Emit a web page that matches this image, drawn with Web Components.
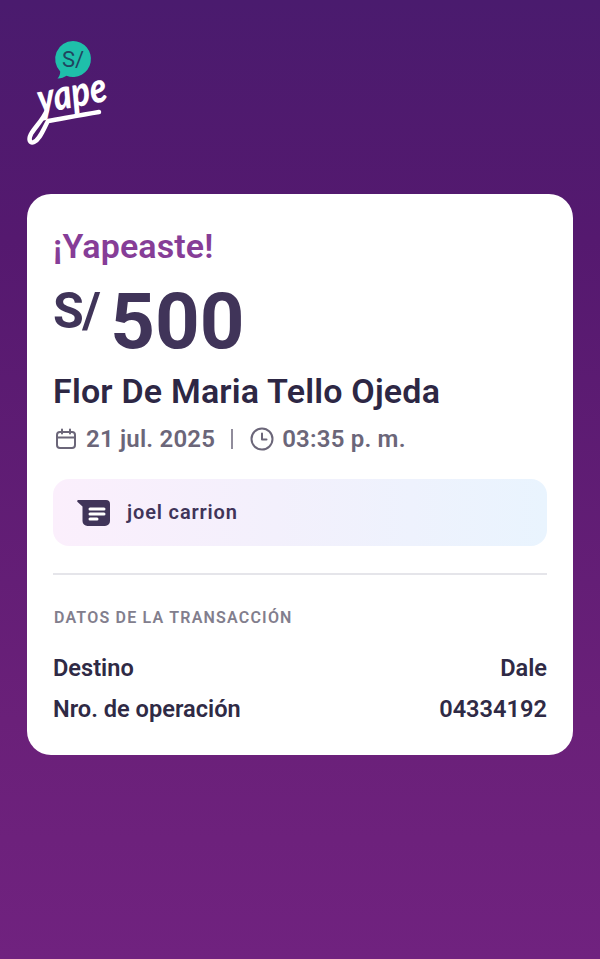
<!DOCTYPE html>
<html lang="es">
<head>
<meta charset="utf-8">
<title>Yape</title>
<style>
  html, body { margin: 0; height: 100%; }
  body { font-family: Roboto, "Liberation Sans", sans-serif; }
</style>
</head>
<body>
<yape-screen>
  <yape-logo></yape-logo>
  <yape-card>
    <yape-amount title-text="¡Yapeaste!" value="500" name="Flor De Maria Tello Ojeda"></yape-amount>
    <yape-date date="21 jul. 2025" time="03:35 p. m."></yape-date>
    <yape-note>joel carrion</yape-note>
    <yape-details heading="DATOS DE LA TRANSACCIÓN">
      <yape-row label="Destino" value="Dale"></yape-row>
      <yape-row label="Nro. de operación" value="04334192"></yape-row>
    </yape-details>
  </yape-card>
</yape-screen>
<script>
class YapeScreen extends HTMLElement {
  constructor() {
    super();
    this.attachShadow({ mode: 'open' });
    this.shadowRoot.innerHTML = `
      <style>
        :host {
          display: flex;
          flex-direction: column;
          box-sizing: border-box;
          height: 959px;
          padding: 40px 27px 0;
          background: linear-gradient(180deg, #4a1b6e 0%, #55196f 25%, #6a2079 75%, #70227f 100%);
          overflow: hidden;
        }
      </style>
      <slot></slot>`;
  }
}

class YapeLogo extends HTMLElement {
  constructor() {
    super();
    this.attachShadow({ mode: 'open' });
    this.shadowRoot.innerHTML = `
      <style>
        :host { display: block; height: 154px; }
        svg { display: block; overflow: visible; }
        text { font-family: Lato, Roboto, sans-serif; }
      </style>
      <svg width="90" height="106" viewBox="0 0 90 106">
        <path d="M46 1a18 18 0 1 1-6.500 34.800c-2.500 1.500-5.500 2.800-9 2.700 1.800-2 2.800-4.300 2.700-7A18 18 0 0 1 46 1z" fill="#1fbfaa"/>
        <text x="46" y="26.500" text-anchor="middle" font-size="22" fill="#1f4560" style="font-family:Roboto,sans-serif">S/</text>
        <text x="13" y="74" font-size="42" font-weight="900" font-style="italic" fill="#fff" textLength="70" lengthAdjust="spacingAndGlyphs" transform="rotate(-11 13 74)">yape</text>
        <path d="M20 70C16 80 8 87 4 94c-3 6-1 10 3 8 6-3 9-12 14-21 17-3 33-6 51-9" fill="none" stroke="#fff" stroke-width="4.500" stroke-linecap="round" stroke-linejoin="round"/>
      </svg>`;
  }
}

class YapeCard extends HTMLElement {
  constructor() {
    super();
    this.attachShadow({ mode: 'open' });
    this.shadowRoot.innerHTML = `
      <style>
        :host {
          display: block;
          box-sizing: border-box;
          height: 561px;
          padding: 30px 26px 0 26px;
          background: #fff;
          border-radius: 24px;
        }
      </style>
      <slot></slot>`;
  }
}

class YapeAmount extends HTMLElement {
  constructor() {
    super();
    this.attachShadow({ mode: 'open' });
    this.shadowRoot.innerHTML = `
      <style>
        :host { display: block; }
        .title { font-size: 34px; line-height: 44px; font-weight: 600; letter-spacing: .1px; color: #863d97; }
        .amount { display: flex; align-items: flex-start; gap: 11px; height: 92px; margin-top: 3px; color: #403459; font-weight: 700; }
        .cur { font-size: 50px; line-height: 56px; margin-top: 12px; font-weight: 700; letter-spacing: -1.500px; }
        .val { font-size: 78px; line-height: 92px; margin-top: 5px; }
        .name { margin-top: 8px; font-size: 34px; line-height: 40px; font-weight: 600; color: #2d2744; letter-spacing: .2px; }
      </style>
      <div class="title">${this.getAttribute('title-text')}</div>
      <div class="amount"><span class="cur">S/</span><span class="val">${this.getAttribute('value')}</span></div>
      <div class="name">${this.getAttribute('name')}</div>`;
  }
}

class YapeDate extends HTMLElement {
  constructor() {
    super();
    this.attachShadow({ mode: 'open' });
    this.shadowRoot.innerHTML = `
      <style>
        :host {
          display: flex;
          align-items: center;
          height: 32px;
          margin-top: 12px;
          font-size: 24px;
          font-weight: 600;
          letter-spacing: .2px;
          color: #6b6679;
        }
        svg { flex: none; display: block; fill: none; stroke: #6b6679; stroke-width: 2; stroke-linecap: round; stroke-linejoin: round; }
        .cal { margin: 0 9px 0 2px; }
        .sep { width: 2px; height: 20px; margin: 0 17px 0 16px; background: #908c9b; }
        .clock { margin-right: 8px; }
      </style>
      <svg class="cal" width="22" height="22" viewBox="0 0 22 22">
        <rect x="2" y="4" width="18" height="16" rx="3"/><path d="M2 9.500h18M7 1.500v4M15 1.500v4"/>
      </svg>
      <span>${this.getAttribute('date')}</span>
      <span class="sep"></span>
      <svg class="clock" width="24" height="24" viewBox="0 0 24 24">
        <circle cx="12" cy="12" r="10.500"/><path d="M12 6.500V12.500H16.500"/>
      </svg>
      <span>${this.getAttribute('time')}</span>`;
  }
}

class YapeNote extends HTMLElement {
  constructor() {
    super();
    this.attachShadow({ mode: 'open' });
    this.shadowRoot.innerHTML = `
      <style>
        :host {
          display: flex;
          align-items: center;
          gap: 16px;
          box-sizing: border-box;
          height: 67px;
          margin-top: 24px;
          padding-left: 24px;
          border-radius: 16px;
          background: linear-gradient(90deg, #fbeffc 0%, #f3f0fc 45%, #e9f4fe 100%);
          font-size: 20px;
          font-weight: 600;
          letter-spacing: .85px;
          color: #403459;
        }
        svg { display: block; flex: none; }
        span { margin-top: -2px; }
      </style>
      <svg width="34" height="28" viewBox="0 0 34 28">
        <path d="M1.500 1C.3 1-.2 2.200.6 3L5.500 7.500V22a5 5 0 0 0 5 5H28a5 5 0 0 0 5-5V5a4 4 0 0 0-4-4z" fill="#403459"/>
        <path d="M13 10h14M13 15h14M13 20h7" fill="none" stroke="#fff" stroke-width="3" stroke-linecap="round"/>
      </svg>
      <span><slot></slot></span>`;
  }
}

class YapeDetails extends HTMLElement {
  constructor() {
    super();
    this.attachShadow({ mode: 'open' });
    this.shadowRoot.innerHTML = `
      <style>
        :host { display: block; margin-top: 27px; border-top: 2px solid #e5e5ea; }
        .heading {
          margin-top: 33px;
          padding-left: 1px;
          font-size: 16px;
          line-height: 20px;
          font-weight: 600;
          letter-spacing: 1.200px;
          color: #827e8d;
        }
        .rows { display: flex; flex-direction: column; gap: 12px; margin-top: 26px; }
      </style>
      <div class="heading">${this.getAttribute('heading')}</div>
      <div class="rows"><slot></slot></div>`;
  }
}

class YapeRow extends HTMLElement {
  constructor() {
    super();
    this.attachShadow({ mode: 'open' });
    this.shadowRoot.innerHTML = `
      <style>
        :host {
          display: flex;
          justify-content: space-between;
          font-size: 23.600px;
          line-height: 29px;
          font-weight: 600;
          color: #2f2a45;
        }
      </style>
      <span>${this.getAttribute('label')}</span>
      <span>${this.getAttribute('value')}</span>`;
  }
}

customElements.define('yape-screen', YapeScreen);
customElements.define('yape-logo', YapeLogo);
customElements.define('yape-card', YapeCard);
customElements.define('yape-amount', YapeAmount);
customElements.define('yape-date', YapeDate);
customElements.define('yape-note', YapeNote);
customElements.define('yape-details', YapeDetails);
customElements.define('yape-row', YapeRow);
</script>
</body>
</html>
